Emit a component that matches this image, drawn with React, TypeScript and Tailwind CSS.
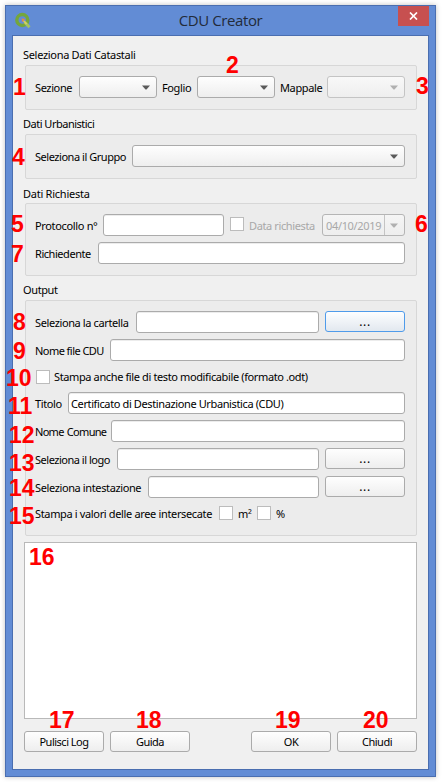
import type { ReactNode } from 'react';

const field = 'h-[22px] rounded-[3px] border border-[#ababab] bg-white shadow-[inset_0_1px_0_#ececec]';
const group = 'ml-3 mr-[11px] rounded-[2px] border border-[#d7d7d7] bg-[#ececec]';

function Text({ children, className = '' }: { children: ReactNode; className?: string }) {
  return <span className={`block h-[22px] shrink-0 leading-[23px] whitespace-nowrap ${className}`}>{children}</span>;
}

function Arrow({ muted = false }: { muted?: boolean }) {
  return (
    <svg width="8" height="5" viewBox="0 0 8 5" className="shrink-0">
      <path d="M0 0.5h8L4.5 4.5h-1Z" fill={muted ? '#b0b0b0' : '#5a5a5a'} />
    </svg>
  );
}

function Combo({ className = '', muted = false }: { className?: string; muted?: boolean }) {
  return (
    <div
      className={`flex h-[22px] items-center justify-end rounded-[3px] border bg-gradient-to-b pr-[6px] ${
        muted ? 'border-[#c4c4c4] from-[#f8f8f8] to-[#eeeeee]' : 'border-[#ababab] from-[#fefefe] to-[#eeeeee]'
      } ${className}`}
    >
      <Arrow muted={muted} />
    </div>
  );
}

function Button({ children, focused = false }: { children: ReactNode; focused?: boolean }) {
  return (
    <button
      className={`flex h-[21px] w-20 shrink-0 items-center justify-center rounded-[3px] border bg-gradient-to-b pt-px whitespace-nowrap ${
        focused ? 'border-[#4f9bea] from-[#fdfeff] to-[#e2e8ef]' : 'border-[#ababab] from-[#fefefe] to-[#eeeeee]'
      }`}
    >
      {children}
    </button>
  );
}

function Dots() {
  return <span className="text-[12px] tracking-[0.7px]">...</span>;
}

function Check() {
  return <span className="block size-[14px] shrink-0 border border-[#bcbcbc] bg-white" />;
}

function Legend({ children, className }: { children: ReactNode; className: string }) {
  return <div className={`pl-[10px] leading-[14px] ${className}`}>{children}</div>;
}

const marks: [string, string][] = [
  ['1', 'left-[13px] top-[76px]'],
  ['2', 'left-[226px] top-[54px]'],
  ['3', 'left-[416px] top-[75px]'],
  ['4', 'left-[12px] top-[146px]'],
  ['5', 'left-[11px] top-[213px]'],
  ['6', 'left-[415px] top-[213px]'],
  ['7', 'left-[11px] top-[243px]'],
  ['8', 'left-[13px] top-[311px]'],
  ['9', 'left-[13px] top-[340px]'],
  ['10', 'left-[6px] top-[367px]'],
  ['11', 'left-[8px] top-[395px]'],
  ['12', 'left-[9px] top-[424px]'],
  ['13', 'left-[9px] top-[452px]'],
  ['14', 'left-[9px] top-[477px]'],
  ['15', 'left-[9px] top-[505px]'],
  ['16', 'left-[29px] top-[546px]'],
  ['17', 'left-[49px] top-[709px]'],
  ['18', 'left-[136px] top-[709px]'],
  ['19', 'left-[275px] top-[709px]'],
  ['20', 'left-[363px] top-[709px]'],
];

export default function App() {
  return (
    <div className="relative h-[782px] w-[442px] overflow-hidden bg-white p-[5px] font-['Noto_Sans',sans-serif] text-[11px] tracking-[-0.38px] text-black">
      <div className="flex h-[772px] w-[431px] flex-col border border-[#4a6eb0] bg-[#628cd5] px-[6px] pb-[6px] shadow-[0_0_5px_rgba(0,0,0,0.25)]">
        <header className="relative flex h-[29px] shrink-0 items-center justify-center">
          <svg width="17" height="17" viewBox="0 0 17 17" className="absolute left-[3px] top-[6px]">
            <circle cx="7.3" cy="8" r="5.5" fill="none" stroke="#74a63c" strokeWidth="3.4" />
            <path d="M9.5 10l5 5.2" stroke="#a3c462" strokeWidth="3" />
            <path d="M6.6 6.6l3.6 0.5-3 3Z" fill="#ec8a3a" />
            <path d="M8.6 8.8l3 3.2" stroke="#d9cf62" strokeWidth="1.5" />
          </svg>
          <h1 className="-mt-px font-['Open_Sans',sans-serif] text-[15px] leading-5 tracking-[-0.4px] text-[#222b3a]">
            CDU Creator
          </h1>
          <button className="absolute right-0 top-0 flex h-5 w-[31px] items-center justify-center bg-[#c75050]">
            <svg width="9" height="8" viewBox="0 0 9 8">
              <path d="M1 0.5l7 7M8 0.5l-7 7" stroke="#fff" strokeWidth="1.7" />
            </svg>
          </button>
        </header>

        <main className="flex h-[735px] w-[417px] flex-col border border-[#4a6eb0] bg-[#f0f0f0]">
          <Legend className="mt-3 mb-[3px] tracking-[-0.31px]">Seleziona Dati Catastali</Legend>
          <section className={`flex h-[45px] items-start pt-[10px] pl-[9px] ${group}`}>
            <Text className="w-11">Sezione</Text>
            <Combo className="w-[78px]" />
            <Text className="ml-[5px] w-[35px]">Foglio</Text>
            <Combo className="w-[78px]" />
            <Text className="ml-[5px] w-[47px]">Mappale</Text>
            <Combo className="w-[78px]" muted />
          </section>

          <Legend className="mt-[7px] mb-[3px] tracking-[-0.5px]">Dati Urbanistici</Legend>
          <section className={`flex h-[45px] items-start pt-[10px] pl-[9px] ${group}`}>
            <Text className="w-[97px] tracking-[-0.46px]">Seleziona il Gruppo</Text>
            <Combo className="w-[273px]" />
          </section>

          <Legend className="mt-2 mb-[2px] tracking-[-0.25px]">Dati Richiesta</Legend>
          <section className={`flex h-[73px] flex-col gap-[6px] pt-[10px] pr-[11px] pl-[9px] ${group}`}>
            <div className="flex h-[22px] items-center">
              <Text className="w-[68px] tracking-[-0.34px]">Protocollo n°</Text>
              <div className={`w-[121px] ${field}`} />
              <div className="-mt-[2px] ml-[6px]"><Check /></div>
              <Text className="ml-[5px] w-[73px] text-[#a8a8a8]">Data richiesta</Text>
              <div className="flex h-[22px] w-[83px] items-center rounded-[3px] border border-[#b5b5b5] bg-gradient-to-b from-[#f5f5f5] to-[#eeeeee] text-[#a8a8a8]">
                <span className="h-5 w-[62px] border-r border-[#c4c4c4] pl-[3px] leading-[21px] tracking-[-0.34px]">04/10/2019</span>
                <span className="flex grow justify-center pr-px"><Arrow muted /></span>
              </div>
            </div>
            <div className="flex h-[22px] items-center">
              <Text className="w-[63px] tracking-[-0.45px]">Richiedente</Text>
              <div className={`grow ${field}`} />
            </div>
          </section>

          <Legend className="mt-[7px] mb-[3px]">Output</Legend>
          <section className={`flex h-[236px] flex-col gap-[6px] pt-[10px] pr-[11px] pl-[9px] ${group}`}>
            <div className="flex h-[22px] items-center">
              <Text className="w-[101px]">Seleziona la cartella</Text>
              <div className={`mr-[6px] grow ${field}`} />
              <div className="self-start"><Button focused><Dots /></Button></div>
            </div>
            <div className="flex h-[22px] items-center">
              <Text className="w-[75px] tracking-[-0.55px]">Nome file CDU</Text>
              <div className={`grow ${field}`} />
            </div>
            <div className="flex h-[19px] items-center gap-1 pl-px">
              <Check />
              <span className="leading-5 whitespace-nowrap">Stampa anche file di testo modificabile (formato .odt)</span>
            </div>
            <div className="flex h-[22px] items-center">
              <Text className="w-[33px]">Titolo</Text>
              <div className={`grow pl-[2px] leading-[21px] ${field}`}>Certificato di Destinazione Urbanistica (CDU)</div>
            </div>
            <div className="flex h-[22px] items-center">
              <Text className="w-[76px] tracking-[-0.7px] [word-spacing:1px]">Nome Comune</Text>
              <div className={`grow ${field}`} />
            </div>
            <div className="flex h-[22px] items-center">
              <Text className="w-[82px] tracking-[-0.48px]">Seleziona il logo</Text>
              <div className={`mr-[6px] grow ${field}`} />
              <div className="self-start"><Button><Dots /></Button></div>
            </div>
            <div className="flex h-[22px] items-center">
              <Text className="w-[113px]">Seleziona intestazione</Text>
              <div className={`mr-[6px] grow ${field}`} />
              <div className="self-start"><Button><Dots /></Button></div>
            </div>
            <div className="flex h-[18px] items-center">
              <Text className="w-[184px] tracking-[-0.35px]">Stampa i valori delle aree intersecate</Text>
              <Check />
              <Text className="ml-[5px] w-[19px]">m²</Text>
              <Check />
              <Text className="ml-[5px]">%</Text>
            </div>
          </section>

          <div className="mt-[6px] mr-[11px] ml-[11px] h-[177px] border border-[#b9b9b9] bg-white" />
          <footer className="mt-3 mr-[11px] ml-[11px] flex gap-[6px] tracking-[-0.5px]">
            <Button>Pulisci Log</Button>
            <Button>Guida</Button>
            <span className="grow" />
            <Button>OK</Button>
            <Button>Chiudi</Button>
          </footer>
        </main>
      </div>

      {marks.map(([n, place]) => (
        <span
          key={n}
          className={`absolute font-['Liberation_Sans',sans-serif] text-[23px] leading-[23px] font-bold tracking-normal text-[#ff0000] ${place}`}
        >
          {n}
        </span>
      ))}
    </div>
  );
}
